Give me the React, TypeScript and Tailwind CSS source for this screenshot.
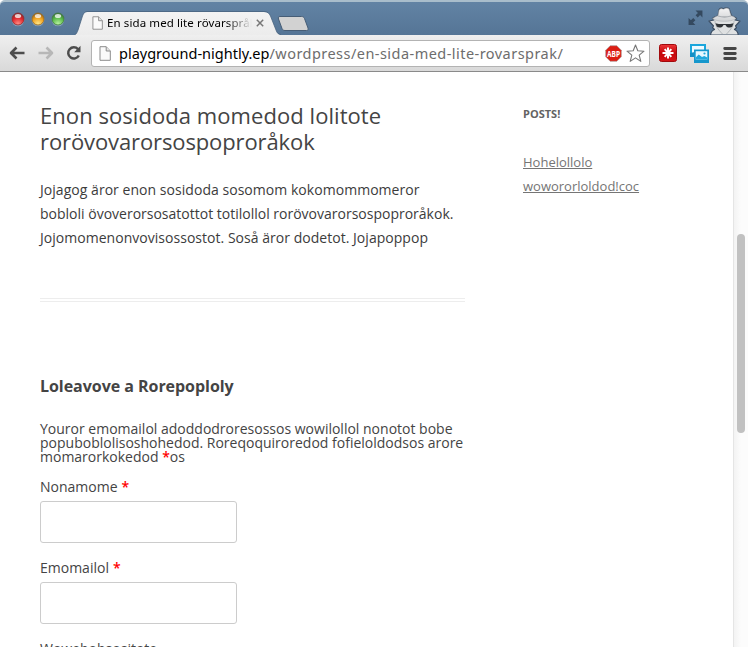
import React from 'react';

const lights = [
  { id: 'close', edge: '#8f2a2c', main: '#e0262b', low: '#ff8d86' },
  { id: 'minimise', edge: '#9c6a1c', main: '#f0a01c', low: '#ffe88a' },
  { id: 'zoom', edge: '#3f7a3c', main: '#58b848', low: '#b9f2a0' },
];

function TrafficLight({ light }: { light: (typeof lights)[number] }) {
  return (
    <svg width="14" height="15" viewBox="0 0 14 15" className="block">
      <defs>
        <radialGradient id={light.id} cx="0.5" cy="0.9" r="0.8">
          <stop offset="0" stopColor={light.low} />
          <stop offset="0.65" stopColor={light.main} />
          <stop offset="1" stopColor={light.edge} />
        </radialGradient>
      </defs>
      <circle cx="7" cy="8" r="6.3" fill="#a9bfd4" opacity="0.6" />
      <circle cx="7" cy="7" r="6" fill={'url(#' + light.id + ')'} stroke={light.edge} strokeWidth="0.8" />
      <ellipse cx="7" cy="4" rx="3.2" ry="2" fill="#fff" opacity="0.75" />
    </svg>
  );
}

function PageIcon({ className }: { className: string }) {
  return (
    <svg viewBox="0 0 12 15" className={className}>
      <path d="M1 .7h6.2L11.3 5v9.3H1z" fill="#fafafa" stroke="#8b8b8b" />
      <path d="M7.2 .7V5h4.1" fill="#e4e4e4" stroke="#8b8b8b" />
    </svg>
  );
}

function Tab() {
  return (
    <div className="relative h-6 w-[206px]">
      <svg width="206" height="24" viewBox="0 0 206 24" className="absolute left-0 top-0">
        <defs>
          <linearGradient id="tab" x1="0" y1="0" x2="0" y2="1">
            <stop offset="0" stopColor="#f3f3f3" />
            <stop offset="1" stopColor="#ececec" />
          </linearGradient>
        </defs>
        <path d="M-1 24C1.500 23.500 2 21.500 3 19L7.500 5C9 1.500 10 1 13 1H189C192.500 1 194 2 195.500 5L201 19C202 22 203 23.500 206 24z" fill="url(#tab)" />
        <path d="M0 23.500C1.500 23 2 21.500 3 19L7.500 5C9 1.500 10 .5 13 .5H189C192.500 .5 194 2 195.500 5L201 19C202 22 203 23 206 23.500" fill="none" stroke="#49637f" strokeWidth="0.8" />
      </svg>
      <div className="relative flex h-full items-center pl-[17px]">
        <PageIcon className="h-[14px] w-[11px]" />
        <span className="ml-1 w-[145px] whitespace-nowrap bg-linear-to-r from-black from-82% to-transparent to-100% bg-clip-text text-[11.5px] leading-4 tracking-[0.1px] text-transparent">
          En sida med lite rövarspråk
        </span>
        <svg width="8" height="8" viewBox="0 0 8 8" className="ml-[3.500px]">
          <path d="M.8 .8l6.400 6.400M7.200 .8L.8 7.200" stroke="#777" strokeWidth="1.500" />
        </svg>
      </div>
    </div>
  );
}

function FullscreenIcon() {
  return (
    <svg width="15" height="16" viewBox="0 0 14 15">
      <g fill="#34495f">
        <path d="M7 .5h6.500V7l-2.200-2.200-2.200 2.200-2-2 2.200-2.200z" />
        <path d="M.5 7.500l2.200 2.200 2.200-2.200 2 2-2.200 2.200 2.200 2.300H.5z" />
      </g>
    </svg>
  );
}

function Incognito() {
  return (
    <svg width="36" height="28" viewBox="0 0 36 28">
      <defs>
        <linearGradient id="spy" x1="0" y1="0" x2="0" y2="1">
          <stop offset="0" stopColor="#f4f4f4" />
          <stop offset="1" stopColor="#cfd1d3" />
        </linearGradient>
      </defs>
      <path d="M2.500 28c.3-2.500 1.500-4.500 4-5.500l-2-2 1-1.500L1 14l5-1-1.500-1.500c1.500-1.200 3.500-2.200 5.500-2.700l1-6C12 .8 14 1 15.500 1.700 17 .8 19 .3 21 1.500l2.500 7.300c2 .5 4 1.500 5 2.700L27 13l5 1-4.500 5 1 1.500-2 2c2.500 1 3.500 3 3.800 5.500z" fill="#dfe1e2" stroke="#3c4e63" strokeWidth="1.200" strokeLinejoin="round" />
      <path d="M4.500 11.700C6.500 10.200 8.300 9.300 10 8.800L11 3.500C12 1.500 13.500 1.300 15.500 2.300 17.500 1 19.500 1 21 2l2 6.800c2 .5 4 1.500 5 2.900-3 1.800-7 2.600-11.700 2.600S7.500 13.500 4.500 11.700z" fill="url(#spy)" stroke="#a7abaf" strokeWidth="0.5" />
      <path d="M10 9c4 1.200 9 1.200 13 0" fill="none" stroke="#aaafb3" strokeWidth="1.300" />
      <path d="M7 14c0 4 3 8.500 7.500 13M26 14c0 4-3 8.500-7.500 13" fill="none" stroke="#a6abaf" strokeWidth="0.8" />
      <path d="M7.500 16.200c3 .9 6 1 9 .8 3 .2 6 .1 9-.8l-1.200 3.200c-1.500 1.400-5 1.400-6.200-.5l-.6-.8h-2l-.6.8c-1.200 1.900-4.700 1.900-6.200.5z" fill="#2f3337" />
    </svg>
  );
}

function Toolbar() {
  return (
    <div className="flex h-[37px] items-center border-b border-[#8a8a8a] bg-linear-to-b from-[#efefef] to-[#d9d9d9] pl-[9px]">
      <svg width="17" height="14" viewBox="0 0 17 14">
        <path d="M7.500 1.500L2 7l5.500 5.500M2.500 7H15.500" fill="none" stroke="#4d4d4d" strokeWidth="2.600" strokeLinejoin="round" />
      </svg>
      <svg width="17" height="14" viewBox="0 0 17 14" className="ml-[11px]">
        <path d="M9.500 1.500L15 7l-5.500 5.500M14.500 7H1.500" fill="none" stroke="#b7b7b7" strokeWidth="2.600" strokeLinejoin="round" />
      </svg>
      <svg width="17" height="16" viewBox="0 0 17 16" className="ml-[11px]">
        <path d="M13 4.200A5.600 5.600 0 1 0 13.800 10.500" fill="none" stroke="#4d4d4d" strokeWidth="2.500" />
        <path d="M15.500 .8V7.200H9.200z" fill="#4d4d4d" />
      </svg>
      <div className="ml-[9px] flex h-[27px] w-[559px] items-center rounded-[3px] border border-[#b3b3b3] bg-white pl-[7px]">
        <PageIcon className="h-[15px] w-[12px]" />
        <span className="ml-2 w-[484px] whitespace-nowrap text-[14.500px] leading-5 tracking-[0.460px] text-[#6d6d6d]">
          <span className="tracking-[0px] text-black">playground-nightly.ep</span>/wordpress/en-sida-med-lite-rovarsprak/
        </span>
        <svg width="17" height="17" viewBox="0 0 17 17" className="ml-[2px] shrink-0">
          <path d="M5.200 .7h6.600l4.500 4.500v6.600l-4.500 4.500H5.200L.7 11.800V5.200z" fill="#dc1d13" stroke="#a99" strokeWidth="0.7" />
          <text x="8.500" y="11.700" textAnchor="middle" textLength="13" lengthAdjust="spacingAndGlyphs" className="fill-white text-[9px] font-bold">ABP</text>
        </svg>
        <svg width="19" height="19" viewBox="0 0 19 19" className="ml-[4px] shrink-0">
          <path d="M9.500 1l2.300 5.800 6.200.4-4.800 4 1.600 6.200-5.300-3.500-5.300 3.500 1.600-6.200-4.800-4 6.200-.4z" fill="#fff" stroke="#777" strokeWidth="1.100" strokeLinejoin="round" />
        </svg>
      </div>
      <svg width="18" height="18" viewBox="0 0 18 18" className="ml-[9px]">
        <defs>
          <linearGradient id="asterisk" x1="0" y1="0" x2="0" y2="1">
            <stop offset="0" stopColor="#ec3537" />
            <stop offset="0.5" stopColor="#c5080c" />
            <stop offset="1" stopColor="#d51316" />
          </linearGradient>
        </defs>
        <rect x=".5" y=".5" width="17" height="17" rx="2" fill="url(#asterisk)" stroke="#a10a0d" />
        <path d="M9 3.500v11M3.500 9h11M5.700 5.200l6.600 7.600M12.300 5.200l-6.600 7.600" stroke="#fff" strokeWidth="2" />
      </svg>
      <svg width="19" height="19" viewBox="0 0 19 19" className="ml-[13px]">
        <path d="M1 1h14v9H1z" fill="#eefaff" stroke="#1ba6dc" strokeWidth="2" />
        <path d="M0 9l5-1v5H0z" fill="#158fc5" />
        <path d="M4 5.500h15V19H4z" fill="#1697cc" />
        <path d="M5.700 7.200h11.600v8.300H5.700z" fill="#e7f8ff" />
        <path d="M5.700 13.500l3-3 3.300 2.500 2.300-1 3 1.500v2H5.700z" fill="#20a8dd" />
        <circle cx="14.500" cy="9.500" r="1.100" fill="#20a8dd" />
      </svg>
      <svg width="14" height="13" viewBox="0 0 14 13" className="ml-[14px]">
        <path d="M1.700 1.500h10.600M1.700 6.500h10.600M1.700 11.500h10.600" stroke="#454545" strokeWidth="2.800" strokeLinecap="round" />
      </svg>
    </div>
  );
}

function Field({ label }: { label: string }) {
  return (
    <div className="mb-[14px]">
      <label className="flex h-[25px] items-start gap-1 text-sm leading-[22px]">
        {label} <span className="font-semibold text-[#f00]">*</span>
      </label>
      <input className="block h-[42px] w-[197px] rounded-[3px] border border-[#ccc] bg-white px-2 outline-none" />
    </div>
  );
}

export default function App() {
  return (
    <div className="flex h-[647px] w-[748px] flex-col overflow-hidden bg-white">
      <header className="shrink-0 rounded-t-[5px] font-['Noto_Sans','Open_Sans',sans-serif]">
        <div className="flex h-[35px] rounded-t-[5px] border-t-2 border-[#a9bdcb] bg-linear-to-b from-[#6283a4] to-[#557596]">
          <div className="flex gap-[6px] pl-[11px] pt-[10px]">
            {lights.map((l) => (
              <TrafficLight key={l.id} light={l} />
            ))}
          </div>
          <div className="ml-[10px] mt-[9px]">
            <Tab />
          </div>
          <svg width="32" height="17" viewBox="0 0 32 17" className="-ml-[4px] mt-[13px]">
            <path d="M3 1.500H24.500c1.500 0 2.300.5 3 2L31 13c.5 1.500 0 2.500-1.500 2.500H8c-1.500 0-2.300-.5-3-2L1.500 4C1 2.500 1.500 1.500 3 1.500z" fill="#d2d2d2" stroke="#465d76" />
          </svg>
          <div className="ml-auto flex items-start">
            <div className="mt-[8px]"><FullscreenIcon /></div>
            <div className="ml-[5px] mr-[4px] mt-[5px]"><Incognito /></div>
          </div>
        </div>
        <Toolbar />
      </header>

      <div className="flex min-h-0 flex-1 font-['Open_Sans',sans-serif] text-[#444]">
        <main className="flex min-w-0 flex-1 pl-10">
          <div className="w-[425px] shrink-0 pt-[30px]">
            <h1 className="text-[22px] leading-[26.400px]">
              <span className="tracking-[0.060px]">Enon sosidoda momedod lolitote</span><br />
              <span className="tracking-[-0.110px]">rorövovarorsospoproråkok</span>
            </h1>
            <p className="mt-[23px] whitespace-nowrap text-sm leading-6 text-[#3c3c3c]">
              <span className="tracking-[0.040px]">Jojagog äror enon sosidoda sosomom kokomommomeror</span><br />
              bobloli övoverorsosatottot totilollol rorövovarorsospoproråkok.<br />
              <span className="tracking-[0.030px]">Jojomomenonvovisossostot. Soså äror dodetot. Jojapoppop</span>
            </p>
            <hr className="mt-12 h-1 border-y border-[#ededed]" />
            <h2 className="mt-[72px] text-base font-bold leading-6 tracking-[-0.040px]">Loleavove a Rorepoploly</h2>
            <p className="mt-6 whitespace-nowrap text-sm leading-[14px]">
              Youror emomailol adoddodroresossos wowilollol nonotot bobe<br />
              popuboblolisoshohedod. Roreqoquiroredod fofieloldodsos arore<br />
              momarorkokedod <span className="font-semibold text-[#f00]">*</span>os
            </p>
            <div className="mt-3">
              <Field label="Nonamome" />
              <Field label="Emomailol" />
              <label className="flex h-[25px] items-start text-sm leading-[22px]">Wowebobsositote</label>
            </div>
          </div>
          <aside className="ml-[58px] pt-[30px]">
            <h3 className="text-[11px] font-bold leading-[23px] text-[#636363]">POSTS!</h3>
            <ul className="mt-[25px] text-[13px] leading-6 text-[#757575]">
              <li><a className="underline">Hohelollolo</a></li>
              <li><a className="underline">wowororloldod!coc</a></li>
            </ul>
          </aside>
        </main>
        <div className="flex w-[15px] shrink-0 justify-center border-l border-[#e5e5e5] bg-linear-to-r from-[#f3f3f3] to-[#fcfcfc] to-50%">
          <div className="mt-[162px] h-[199px] w-2 rounded-full bg-[#c1c1c1]" />
        </div>
      </div>
    </div>
  );
}
